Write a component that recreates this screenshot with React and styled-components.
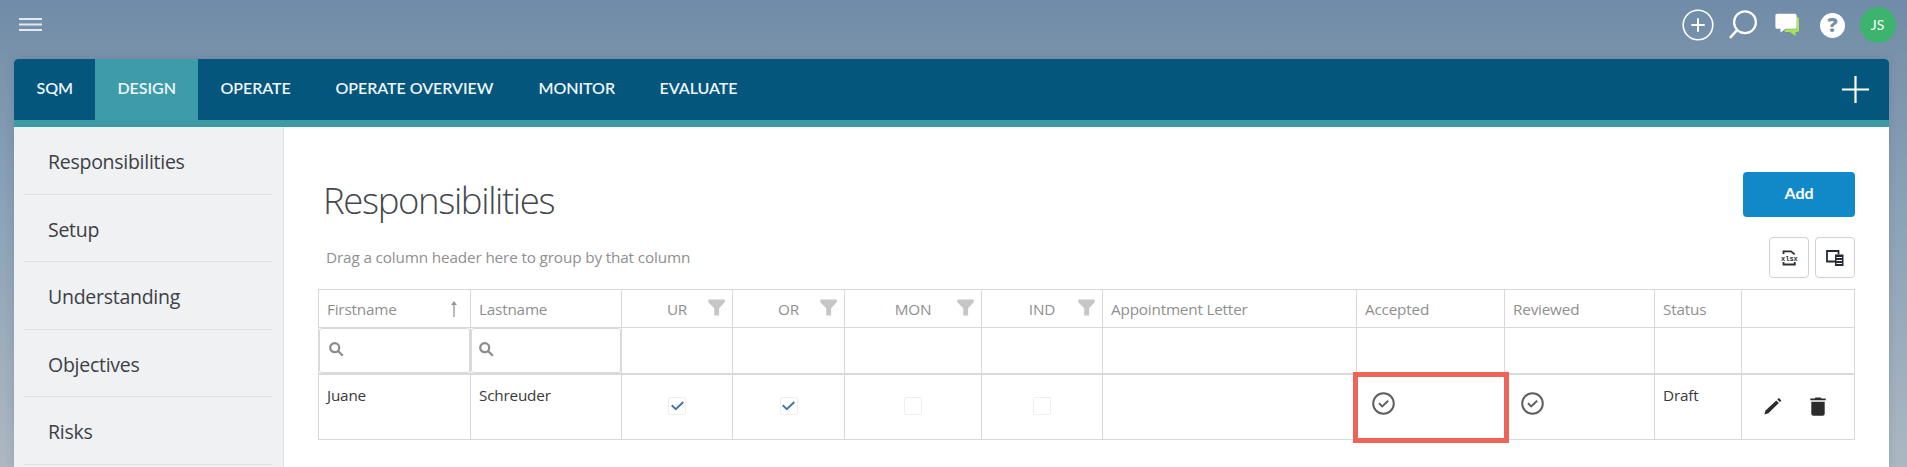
import React from "react";
import styled, { createGlobalStyle } from "styled-components";

const TABS = [
  { label: "SQM", width: 81 },
  { label: "DESIGN", width: 103, active: true },
  { label: "OPERATE", width: 115 },
  { label: "OPERATE OVERVIEW", width: 203 },
  { label: "MONITOR", width: 121 },
  { label: "EVALUATE", width: 124 },
];

const MENU = ["Responsibilities", "Setup", "Understanding", "Objectives", "Risks"];

const COLUMNS = [
  { label: "Firstname", sorted: true, search: true },
  { label: "Lastname", search: true },
  { label: "UR", filter: true },
  { label: "OR", filter: true },
  { label: "MON", filter: true },
  { label: "IND", filter: true },
  { label: "Appointment Letter" },
  { label: "Accepted" },
  { label: "Reviewed" },
  { label: "Status" },
  { label: "" },
];

export default function App() {
  return (
    <Page>
      <GlobalStyle />
      <TopBar>
        <MenuIcon />
        <TopActions>
          <Slot><AddCircleIcon /></Slot>
          <Slot><TopSearchIcon /></Slot>
          <Slot><ChatIcon /></Slot>
          <Slot><Help>?</Help></Slot>
          <Slot><Avatar>JS</Avatar></Slot>
        </TopActions>
      </TopBar>
      <Panel>
        <Nav>
          {TABS.map((tab) => (
            <Tab key={tab.label} $width={tab.width} $active={tab.active}>
              {tab.label}
            </Tab>
          ))}
          <NavAdd>
            <svg width="27" height="27" viewBox="0 0 27 27" fill="none" stroke="#fff" strokeWidth="2.2">
              <path d="M13.5 0v27M0 13.5h27" />
            </svg>
          </NavAdd>
        </Nav>
        <Body>
          <Sidebar>
            {MENU.map((item) => (
              <SideItem key={item}>{item}</SideItem>
            ))}
          </Sidebar>
          <Content>
            <TitleRow>
              <Title>Responsibilities</Title>
              <AddButton>Add</AddButton>
            </TitleRow>
            <Toolbar>
              <GroupHint>Drag a column header here to group by that column</GroupHint>
              <ToolButton><XlsxIcon /></ToolButton>
              <ToolButton><ColumnsIcon /></ToolButton>
            </Toolbar>
            <Grid>
              {COLUMNS.map((col, i) => (
                <HeadCell key={i} $centered={col.filter}>
                  <HeadText $centered={col.filter}>{col.label}</HeadText>
                  {col.sorted && <SortIcon />}
                  {col.filter && <FilterIcon />}
                </HeadCell>
              ))}
              {COLUMNS.map((col, i) => (
                <FilterCell key={i}>
                  {col.search && (
                    <SearchBox $first={i === 0}>
                      <SearchIcon />
                    </SearchBox>
                  )}
                </FilterCell>
              ))}
              <Cell>Juane</Cell>
              <Cell>Schreuder</Cell>
              <CheckCell><CheckBox><CheckIcon /></CheckBox></CheckCell>
              <CheckCell><CheckBox><CheckIcon /></CheckBox></CheckCell>
              <CheckCell><CheckBox /></CheckCell>
              <CheckCell><CheckBox /></CheckCell>
              <Cell />
              <StateCell $indent={15}>
                <CheckCircleIcon />
                <Highlight />
              </StateCell>
              <StateCell $indent={16}><CheckCircleIcon /></StateCell>
              <Cell>Draft</Cell>
              <ActionCell>
                <PencilIcon />
                <TrashIcon />
              </ActionCell>
            </Grid>
          </Content>
        </Body>
      </Panel>
    </Page>
  );
}

const MenuIcon = () => (
  <svg width="24" height="16" viewBox="0 0 24 16" fill="none" stroke="#e1e9f3" strokeWidth="2">
    <path d="M0 2h23M0 7.500h23M0 13h23" />
  </svg>
);

const AddCircleIcon = () => (
  <svg width="32" height="32" viewBox="0 0 32 32" fill="none" stroke="#fff">
    <circle cx="16" cy="16" r="14.8" strokeWidth="1.6" />
    <path d="M16 9.3v13.4M9.3 16h13.4" strokeWidth="2" />
  </svg>
);

const TopSearchIcon = () => (
  <svg width="30" height="32" viewBox="0 0 30 32" fill="none" stroke="#fff" strokeWidth="2.2">
    <circle cx="17" cy="13.2" r="10.9" />
    <path d="M9.3 20.8L2 28.8" strokeWidth="2.5" />
  </svg>
);

const ChatIcon = () => (
  <svg width="25" height="24" viewBox="0 0 25 24">
    <path fill="#a5e653" d="M21.5 4h.8a1.700 1.700 0 011.700 1.700v11.600a1.800 1.800 0 01-1.800 1.800h-1.700v4L15 19.100h-4.500L9 17.700l3-1.500h9.500z" />
    <path fill="#fff" d="M2 .8h18a1.600 1.600 0 011.600 1.600v11.800a1.600 1.600 0 01-1.600 1.600h-9.300L5.500 19.600v-3.800H2a1.600 1.600 0 01-1.600-1.600V2.400A1.600 1.600 0 012 .8z" />
  </svg>
);

const XlsxIcon = () => (
  <svg width="22" height="18" viewBox="0 0 22 18" fill="none" stroke="#2b2f33" strokeWidth="1.8">
    <path d="M5.500 5V2.400h7.500l3.700 3M5.500 13v2.500h11.300V13" />
    <text x="3" y="11.500" fontSize="7" fontWeight="700" fontFamily="Liberation Mono, monospace" fill="#2b2f33" stroke="none">xlsx</text>
  </svg>
);

const ColumnsIcon = () => (
  <svg width="20" height="18" viewBox="0 0 20 18">
    <path d="M10 12.500H2V2h11.500v3.500" fill="none" stroke="#262b33" strokeWidth="1.8" />
    <path d="M10 5.500h8.500V17H10z" fill="#262b33" />
    <path d="M11.500 8.500H17M11.500 11.500H17M11.500 14.500H17" stroke="#fff" strokeWidth="1" />
  </svg>
);

const SortIcon = () => (
  <svg width="8" height="16" viewBox="0 0 8 16">
    <path d="M4 1v15" stroke="#959595" strokeWidth="1.3" />
    <path d="M4 0l2.900 4H1.100z" fill="#959595" />
  </svg>
);

const FilterIcon = () => (
  <FunnelSvg viewBox="0 0 17 17">
    <path d="M.3.500h16.400v2.700l-5.600 6V16.500H6.200V9.200L.3 3.200z" fill="#c6c6c6" />
  </FunnelSvg>
);

const SearchIcon = () => (
  <svg width="15" height="15" viewBox="0 0 15 15" fill="none" stroke="#8b8b8b" strokeWidth="2.2">
    <circle cx="5.700" cy="5.700" r="4.500" />
    <path d="M9 9l4.800 4.800" />
  </svg>
);

const CheckIcon = () => (
  <svg width="13" height="10" viewBox="0 0 13 10" fill="none" stroke="#47749f" strokeWidth="1.9">
    <path d="M.7 4.300l4.100 3.900L12.300 1" />
  </svg>
);

const CheckCircleIcon = () => (
  <svg width="23" height="23" viewBox="0 0 23 23" fill="none" stroke="#606060" strokeWidth="2">
    <circle cx="11.500" cy="11.500" r="10.300" />
    <path d="M7 11.300l3.200 3.100 6-5.700" />
  </svg>
);

const PencilIcon = () => (
  <svg width="18" height="18" viewBox="0 0 18 18" fill="#2c2c2c">
    <path d="M.4 17.600l1.100-4.200L12.300 3.500l2.500 2.500L4.400 16.200z" />
    <path d="M13.300 2.500L14.900 1l2.500 2.500L15.800 5z" />
  </svg>
);

const TrashIcon = () => (
  <svg width="16" height="19" viewBox="0 0 16 19" fill="#2c2c2c">
    <path d="M.3 1.500h4.200L5.500.400h5l1 1.100h4.200v1.700H.300z" />
    <path d="M1.300 4.700h13.400v12a2 2 0 01-2 2H3.300a2 2 0 01-2-2z" />
  </svg>
);

const GlobalStyle = createGlobalStyle`
  * {
    box-sizing: border-box;
  }
  body {
    margin: 0;
    overflow: hidden;
    font-family: "Open Sans", "Noto Sans", sans-serif;
  }
  svg {
    display: block;
    flex: none;
  }
`;

const Page = styled.div`
  display: flex;
  flex-direction: column;
  height: 100vh;
  padding: 0 18px 0 14px;
  background: linear-gradient(#708ca8 0%, #7b93ab 14%, #8ba2b7 45%, #9aabbb 70%, #acb7c2 100%);
`;

const TopBar = styled.div`
  display: flex;
  justify-content: space-between;
  height: 59px;
  flex: none;
  padding: 0 0 0 5px;
  margin-right: -11px;
  > svg {
    margin-top: 17px;
  }
`;

const TopActions = styled.div`
  display: flex;
  height: 50px;
`;

const Slot = styled.div`
  display: flex;
  align-items: center;
  justify-content: center;
  width: 45px;
`;

const Help = styled.div`
  width: 25px;
  height: 25px;
  border-radius: 50%;
  background: #fff;
  color: #768ea8;
  font-size: 20px;
  font-weight: 800;
  line-height: 24px;
  text-align: center;
`;

const Avatar = styled.div`
  width: 36px;
  height: 36px;
  flex: none;
  border-radius: 50%;
  background: #3cb46e;
  color: #fff;
  font: 14px/36px Lato, sans-serif;
  text-align: center;
`;

const Panel = styled.div`
  display: flex;
  flex-direction: column;
  flex: 1;
  min-height: 0;
  border-radius: 4px 4px 0 0;
  overflow: hidden;
  background: #fff;
  box-shadow: 0 0 8px rgba(40, 60, 90, 0.16);
`;

const Nav = styled.div`
  display: flex;
  flex: none;
  height: 68px;
  background: #05567d;
  border-bottom: 7px solid #3b9ba5;
`;

const Tab = styled.div`
  width: ${(props) => props.$width}px;
  padding-left: 22.5px;
  background: ${(props) => (props.$active ? "#3e9ca8" : "transparent")};
  color: #eef6fb;
  font: 600 16px/57px Lato, sans-serif;
  letter-spacing: -0.05px;
  white-space: nowrap;
`;

const NavAdd = styled.div`
  margin: 17px 20px 0 auto;
`;

const Body = styled.div`
  display: flex;
  flex: 1;
  min-height: 0;
`;

const Sidebar = styled.div`
  width: 270px;
  flex: none;
  padding: 0 11px 0 10px;
  background: #f0f1f3;
  border-right: 1px solid #dfe1e4;
`;

const SideItem = styled.div`
  height: 67.6px;
  padding-left: 24px;
  border-bottom: 1px solid #dfe2e5;
  color: #3c3f45;
  font-size: 19.5px;
  line-height: 70px;
  letter-spacing: -0.27px;
`;

const Content = styled.div`
  flex: 1;
  padding: 45px 34px 0 34px;
`;

const TitleRow = styled.div`
  display: flex;
  justify-content: space-between;
  height: 65px;
`;

const Title = styled.h1`
  margin: 0 0 0 5px;
  color: #44484e;
  font-size: 36.5px;
  font-weight: 300;
  line-height: 57px;
  letter-spacing: -1.35px;
`;

const AddButton = styled.button`
  width: 112px;
  height: 45px;
  padding: 0 0 4px;
  border: 0;
  border-radius: 4px;
  background: #1189c9;
  color: #fff;
  font: 700 16px Lato, sans-serif;
`;

const Toolbar = styled.div`
  display: flex;
  gap: 6px;
  height: 52px;
`;

const GroupHint = styled.div`
  flex: 1;
  padding-left: 8px;
  color: #8f8f8f;
  font-size: 15.3px;
  line-height: 40px;
  letter-spacing: -0.15px;
`;

const ToolButton = styled.button`
  display: flex;
  align-items: center;
  justify-content: center;
  width: 40px;
  height: 41px;
  padding: 0;
  border: 1px solid #d2d2d2;
  border-radius: 4px;
  background: #fff;
`;

const Grid = styled.div`
  display: grid;
  grid-template-columns: 152px 151px 111px 112px 137px 121px 254px 148px 150px 87px 113px;
  grid-template-rows: 38px 47px 64px;
  width: 1537px;
  border: 1px solid #d9d9d9;
  border-right: 0;
  color: #3a3a3a;
  font-size: 15.3px;
  letter-spacing: -0.2px;
`;

const Cell = styled.div`
  padding: 10px 0 0 8px;
  border-right: 1px solid #d9d9d9;
  line-height: 20px;
`;

const HeadCell = styled(Cell)`
  display: flex;
  align-items: center;
  justify-content: space-between;
  padding: 0 ${(props) => (props.$centered ? 7 : 12)}px 0 8px;
  border-bottom: 1px solid #d9d9d9;
  color: #8f8f8f;
  white-space: nowrap;
`;

const HeadText = styled.span`
  flex: 1;
  text-align: ${(props) => (props.$centered ? "center" : "left")};
  padding-left: ${(props) => (props.$centered ? 16 : 0)}px;
`;

const FunnelSvg = styled.svg`
  width: 17px;
  height: 17px;
  margin-top: -3px;
`;

const FilterCell = styled(Cell)`
  padding: 0;
  border-bottom: 2px solid #d9d9d9;
`;

const SearchBox = styled.div`
  display: flex;
  align-items: center;
  height: 45px;
  padding: 0 0 3px ${(props) => (props.$first ? 9 : 7)}px;
  border: 1px solid #d9d9d9;
  border-radius: 3px;
`;

const CheckCell = styled(Cell)`
  display: flex;
  justify-content: center;
  padding: 22px 0 0;
`;

const CheckBox = styled.div`
  display: flex;
  align-items: center;
  justify-content: center;
  width: 18px;
  height: 18px;
  border: 1px solid #efefef;
  border-radius: 2px;
`;

const StateCell = styled(Cell)`
  position: relative;
  padding: 17px 0 0 ${(props) => props.$indent}px;
`;

const Highlight = styled.div`
  position: absolute;
  inset: -3px -5px -4px -4px;
  z-index: 1;
  border: 5px solid #ee6558;
`;

const ActionCell = styled(Cell)`
  display: flex;
  gap: 28px;
  padding: 22px 0 0 22px;
`;
